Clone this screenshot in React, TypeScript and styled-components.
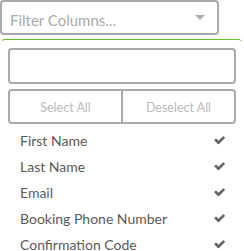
import React from 'react'
import styled, { createGlobalStyle } from 'styled-components'

const GlobalStyle = createGlobalStyle`
  html, body {
    margin: 0;
    padding: 0;
    background: #fff;
  }
  body {
    font-family: Lato, 'Open Sans', sans-serif;
  }
`

const Wrapper = styled.div`
  width: 244px;
  height: 251px;
  overflow: hidden;
`

const SelectBox = styled.div`
  box-sizing: border-box;
  width: 219px;
  height: 35px;
  border: 2px solid #aaa;
  border-radius: 4px;
  display: flex;
  align-items: center;
  padding: 5px 12px 0 8px;
  color: #aaa;
  font-size: 15px;
`

const Placeholder = styled.span`
  flex: 1;
`

const Caret = styled.span`
  width: 0;
  height: 0;
  border-left: 5px solid transparent;
  border-right: 5px solid transparent;
  border-top: 5px solid #aaa;
  margin-top: -5px;
`

const Panel = styled.div`
  box-sizing: border-box;
  width: 243px;
  margin-top: 4px;
  border-top: 1px solid #66c22e;
  border-left: 1px solid transparent;
  border-right: 1px solid transparent;
  border-radius: 5px 5px 0 0;
  padding: 8px 7px 0 7px;
`

const SearchInput = styled.input`
  display: block;
  box-sizing: border-box;
  width: 228px;
  height: 36px;
  border: 2px solid #aaa;
  border-radius: 4px;
  outline: none;
  padding: 0 8px;
  font: inherit;
`

const ButtonGroup = styled.div`
  display: flex;
  width: 228px;
  margin-top: 5px;
`

const GroupButton = styled.button<{ $first?: boolean }>`
  flex: 1;
  box-sizing: border-box;
  height: 35px;
  background: #fff;
  border: 2px solid #aaa;
  border-radius: ${(p) => (p.$first ? '4px 0 0 4px' : '0 4px 4px 0')};
  margin-left: ${(p) => (p.$first ? '0' : '-2px')};
  color: #bbb;
  font-family: inherit;
  font-size: 12.5px;
  padding: 2px 0 0 0;
`

const List = styled.ul`
  list-style: none;
  margin: 3px 0 0 0;
  padding: 0;
`

const Item = styled.li`
  display: flex;
  align-items: center;
  justify-content: space-between;
  height: 26px;
  padding: 0 10px 0 12px;
  color: #5a5a5a;
  font-size: 14px;
`

const CheckIcon = () => (
  <svg width="11" height="9" viewBox="60 200 1620 1100" fill="#666">
    <path d="M1671 349q0 40-28 68l-724 724-136 136q-28 28-68 28t-68-28l-136-136-362-362q-28-28-28-68t28-68l136-136q28-28 68-28t68 28l294 295 656-657q28-28 68-28t68 28l136 136q28 28 28 68z" />
  </svg>
)

const columns = ['First Name', 'Last Name', 'Email', 'Booking Phone Number', 'Confirmation Code']

export default function App() {
  return (
    <Wrapper>
      <GlobalStyle />
      <SelectBox>
        <Placeholder>Filter Columns...</Placeholder>
        <Caret />
      </SelectBox>
      <Panel>
        <SearchInput />
        <ButtonGroup>
          <GroupButton $first>Select All</GroupButton>
          <GroupButton>Deselect All</GroupButton>
        </ButtonGroup>
        <List>
          {columns.map((c) => (
            <Item key={c}>
              <span>{c}</span>
              <CheckIcon />
            </Item>
          ))}
        </List>
      </Panel>
    </Wrapper>
  )
}
